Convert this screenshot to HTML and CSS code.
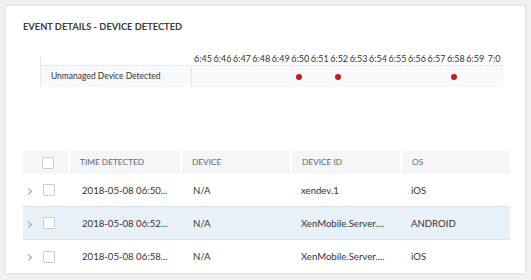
FILE: index.html
```html
<!DOCTYPE html>
<html>
<head>
<meta charset="utf-8">
<link rel="stylesheet" href="styles.css">
</head>
<body>
<div class="card">
  <h1 class="title">EVENT DETAILS - DEVICE DETECTED</h1>
  <div class="timeline">
    <div class="tl-row tl-head">
      <div class="tl-label"></div>
      <div class="tl-track ticks">
        <span>6:45</span><span>6:46</span><span>6:47</span><span>6:48</span><span>6:49</span><span>6:50</span><span>6:51</span><span>6:52</span><span>6:53</span><span>6:54</span><span>6:55</span><span>6:56</span><span>6:57</span><span>6:58</span><span>6:59</span><span class="last-tick">7:0</span>
      </div>
    </div>
    <div class="tl-row tl-band">
      <div class="tl-label band-label">Unmanaged Device Detected</div>
      <div class="tl-track points">
        <span></span><span></span><span></span><span></span><span></span><span><i class="dot"></i></span><span></span><span><i class="dot"></i></span><span></span><span></span><span></span><span></span><span></span><span><i class="dot"></i></span><span></span><span></span>
      </div>
    </div>
  </div>
  <div class="table">
    <div class="thead">
      <div class="th th-check"><span class="cb"></span></div>
      <div class="th">TIME DETECTED</div>
      <div class="th">DEVICE</div>
      <div class="th">DEVICE ID</div>
      <div class="th">OS</div>
    </div>
    <div class="tr">
      <div class="td td-check"><span class="chev"></span><span class="cb"></span></div>
      <div class="td td-time">2018-05-08 06:50...</div>
      <div class="td td-dev">N/A</div>
      <div class="td td-id">xendev.1</div>
      <div class="td td-os">iOS</div>
    </div>
    <div class="tr sel">
      <div class="td td-check"><span class="chev"></span><span class="cb"></span></div>
      <div class="td td-time">2018-05-08 06:52...</div>
      <div class="td td-dev">N/A</div>
      <div class="td td-id">XenMobile.Server....</div>
      <div class="td td-os">ANDROID</div>
    </div>
    <div class="tr last">
      <div class="td td-check"><span class="chev"></span><span class="cb"></span></div>
      <div class="td td-time">2018-05-08 06:58...</div>
      <div class="td td-dev">N/A</div>
      <div class="td td-id">XenMobile.Server....</div>
      <div class="td td-os">iOS</div>
    </div>
  </div>
</div>
</body>
</html>
```

FILE: styles.css
```css
* { box-sizing: border-box; }
html, body { margin: 0; padding: 0; }
body {
  background: #f1f1f3;
  font-family: Lato, "Open Sans", sans-serif;
  color: #333;
  width: 531px;
  height: 280px;
  overflow: hidden;
}
.card {
  margin: 5px 0 0 5px;
  width: 521px;
  height: 269px;
  background: #fff;
  border: 1px solid #e4e4e8;
  box-shadow: 0 0 3px rgba(0,0,0,0.06);
  padding: 0 0 0 17px;
}
.title {
  margin: 0;
  padding-top: 14px;
  font-size: 9.3px;
  font-weight: 700;
  color: #3a3a3a;
  line-height: 14px;
}
.timeline {
  margin: 22px 0 0 17px;
  width: 463px;
  border-left: 1px solid #e8e8ec;
}
.tl-row { display: flex; }
.tl-label { width: 151px; flex: none; }
.tl-head { height: 10px; border-bottom: 1px dashed #dcdce2; }
.tl-band { height: 21px; background: #f8f9fd; }
.band-label {
  border-right: 1px solid #e6e6ea;
  font-size: 8.5px;
  line-height: 20px;
  padding-left: 10px;
  color: #333;
}
.tl-track {
  display: grid;
  grid-template-columns: repeat(16, 19.46px);
  flex: 1;
  padding-left: 2px;
}
.ticks span {
  font-size: 9px;
  line-height: 10px;
  height: 10px;
  margin-top: -2px;
  color: #333;
  white-space: nowrap;
}
.ticks .last-tick { padding-left: 2px; }
.points span { display: flex; align-items: center; }
.dot {
  display: block;
  width: 6px;
  height: 6px;
  border-radius: 50%;
  background: #c8161d;
  margin-left: 4.5px;
}
.table {
  margin-top: 64px;
  width: 487px;
}
.thead {
  display: grid;
  grid-template-columns: 45px 110px 108px 108px 108px;
  column-gap: 2px;
  height: 23px;
}
.th {
  background: #f4f5f7;
  font-size: 8.3px;
  color: #5f6570;
  line-height: 23px;
  padding-left: 10px;
}
.th-check { padding-left: 19px; display: flex; align-items: center; }
.cb {
  display: block;
  width: 12px;
  height: 12px;
  border: 1px solid #c9ccd2;
  background: #fff;
  border-radius: 1px;
}
.tr {
  display: grid;
  grid-template-columns: 45px 110px 108px 108px 108px;
  column-gap: 2px;
  height: 33px;
  border-bottom: 1px solid #dde2e8;
  align-items: center;
}
.tr.last { border-bottom: none; }
.tr.sel { background: #e9f1f8; }
.td {
  font-size: 9.6px;
  color: #333;
  white-space: nowrap;
}
.td-check { display: flex; align-items: center; padding-left: 3px; }
.chev {
  display: block;
  width: 5px;
  height: 5px;
  border-top: 1px solid #9aa0a8;
  border-right: 1px solid #9aa0a8;
  transform: rotate(45deg);
  margin-right: 12px;
  margin-top: 2px;
}
.td-time { padding-left: 12px; }
.td-dev { padding-left: 11px; }
.td-id { padding-left: 9px; }
.td-os { padding-left: 9px; }
```
